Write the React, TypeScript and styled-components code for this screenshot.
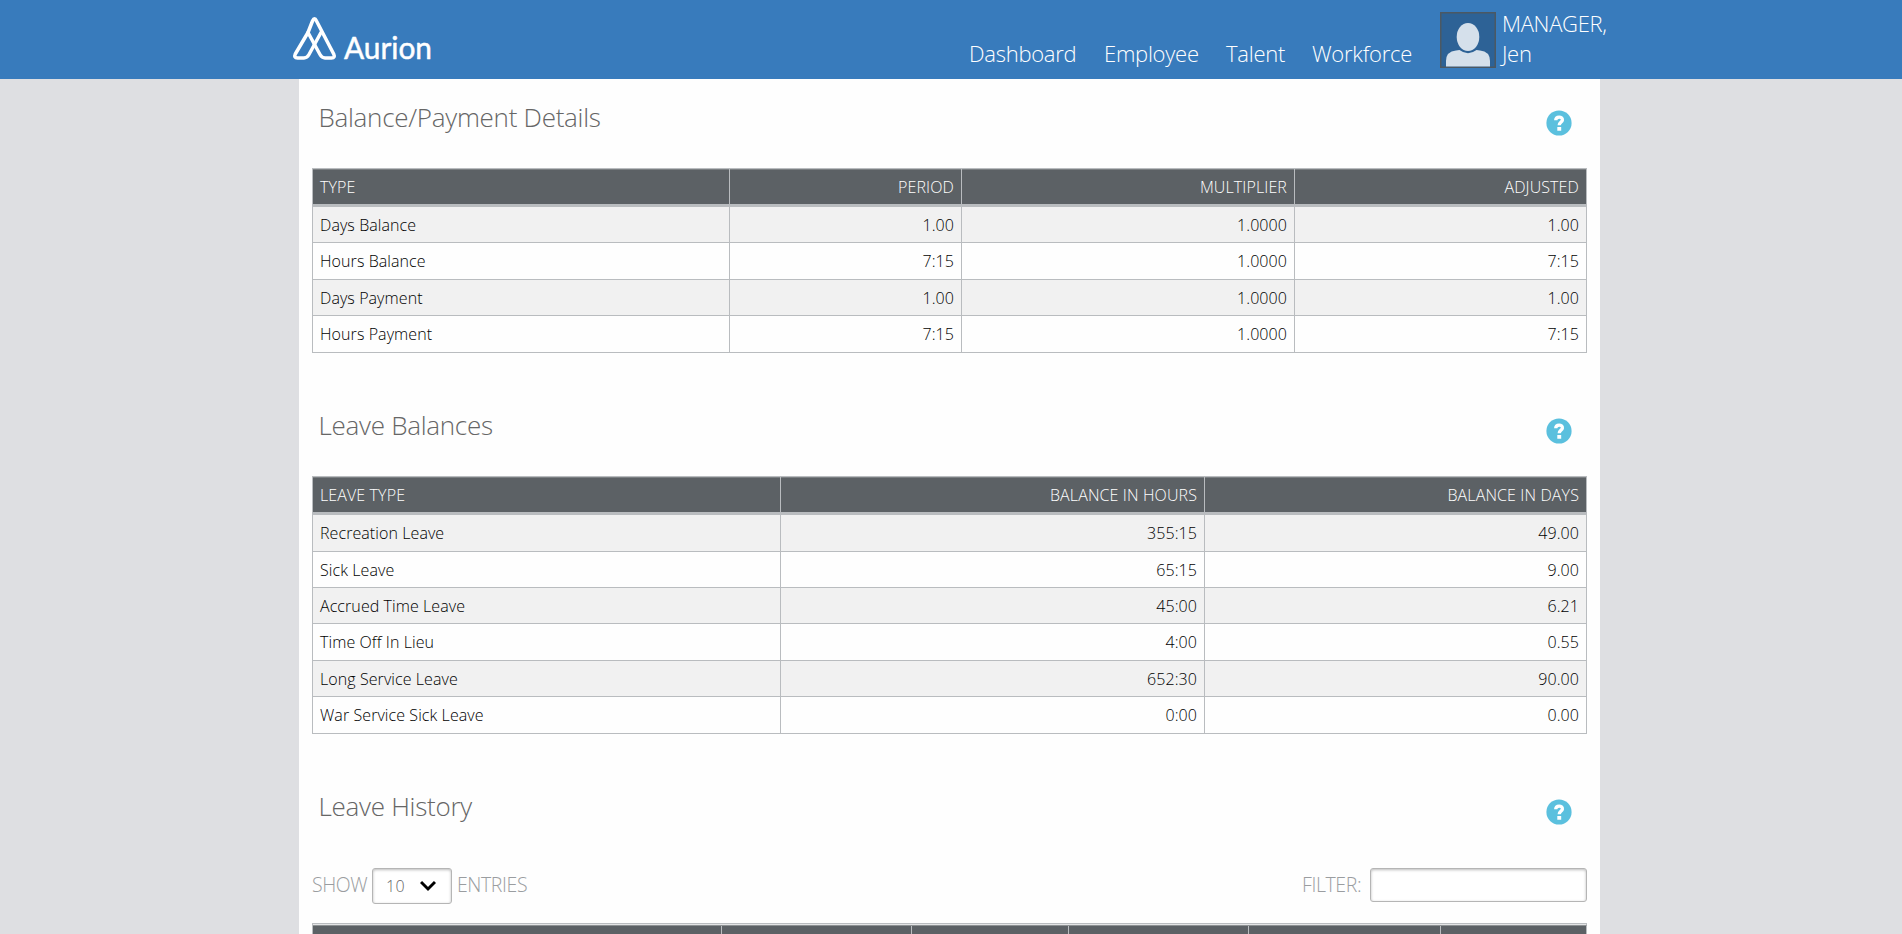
import React from "react";
import styled, { createGlobalStyle } from "styled-components";

const Global = createGlobalStyle`
  * { box-sizing: border-box; }
  body { margin: 0; background: #dedfe2; font-family: "Open Sans", sans-serif; font-weight: 300; height: 934px; overflow: hidden; }
`;
const Page = styled.div`height: 934px; overflow: hidden;`;
const Header = styled.header`
  height: 79px; background: #387bbc; color: #fff; display: flex; padding: 0 290px 0 292px; justify-content: space-between;
`;
const Logo = styled.svg`display: block; width: 140px; height: 46px; margin-top: 16px; overflow: visible;`;
const Wordmark = styled.text`font-family: Lato, sans-serif; font-size: 31px; font-weight: 400; fill: #fff; stroke: #fff; stroke-width: 0.5px;`;
const Right = styled.div`display: flex;`;
const Nav = styled.nav`display: flex; gap: 27px; margin: 37px 26px 0 0;`;
const NavItem = styled.a<{ $w: number }>`
  font-size: 22px; line-height: 32px; letter-spacing: -0.26px; width: ${(p) => p.$w}px; white-space: nowrap;
`;
const Avatar = styled.svg`width: 56px; height: 56px; margin: 12px 6px 0 0;`;
const UserName = styled.div`width: 110px; font-size: 22px; line-height: 30px; letter-spacing: -0.3px; margin-top: 8px; white-space: nowrap;`;
const Panel = styled.main`width: 1301px; height: 855px; margin-left: 299px; background: #fefefe; padding: 0 13px;`;
const Heading = styled.div<{ $h: number; $pt: number }>`
  height: ${(p) => p.$h}px; padding: ${(p) => p.$pt}px 15.5px 0 6.5px; display: flex; justify-content: space-between;
`;
const Title = styled.h2`margin: 0; font-size: 26px; line-height: 36px; font-weight: 300; letter-spacing: -0.28px; color: #666;`;
const Help = styled.svg`width: 26px; height: 26px; margin-top: 11px;`;
const Table = styled.div`border-left: 1px solid #b9bcbf; border-top: 1px solid #b9bcbf; width: 1275px;`;
const Row = styled.div<{ $cols: string; $h: number; $odd?: boolean }>`
  display: grid; grid-template-columns: ${(p) => p.$cols}; height: ${(p) => p.$h}px;
  border-bottom: 1px solid #b9bcbf; background: ${(p) => (p.$odd ? "#f1f1f1" : "#fefefe")}; color: #000;
`;
const HeadRow = styled(Row)`background: #5c6165; color: #fff; border-bottom: 3px solid #b9bcbf; box-shadow: inset 0 1px #7b7f82;`;
const Cell = styled.div`
  border-right: 1px solid #b9bcbf; padding: 0 7px; font-size: 16px; line-height: 36px; letter-spacing: 0.08px;
  white-space: nowrap; overflow: hidden;
  &:not(:first-child) { text-align: right; }
`;
const HeadCell = styled(Cell)`line-height: 37px; letter-spacing: 0.12px;`;
const Controls = styled.div`
  display: flex; justify-content: space-between; height: 55px; color: #9a9da0; font-size: 19.5px; letter-spacing: -0.4px;
`;
const Group = styled.div`display: flex;`;
const Label = styled.label<{ $w: number; $indent?: number }>`
  width: ${(p) => p.$w}px; padding-left: ${(p) => p.$indent ?? 0}px; line-height: 34px; white-space: nowrap;
`;
const Select = styled.div`
  width: 80px; height: 36px; border: 1px solid #b5b5b5; border-radius: 3px; box-shadow: inset 0 1px 3px #bbb;
  display: flex; align-items: center; justify-content: space-between; padding: 0 15px 0 13px; font-size: 16px;
  letter-spacing: 0.3px; color: #666; background: #fff;
`;
const Input = styled.input`width: 217px; height: 34px; border: 1px solid #b5b5b5; border-radius: 3px; box-shadow: inset 0 1px 3px #bbb; background: #fff;`;
const HistoryTop = styled.div`height: 2px; background: #e4e5e6; border-bottom: 1px solid #8d9193; border-right: 1px solid #b9bcbf;`;
const HistoryHead = styled(Row)`background: #5c6165; border: 0;`;

const HelpIcon = () => (
  <Help viewBox="0 0 26 26">
    <circle cx="13" cy="13" r="12.6" fill="#5bc0de" />
    <path d="M9.7 10.3C9.8 5.9 16.7 6.1 16.4 10C16.2 12.4 13.2 12.4 13.2 15.3" fill="none" stroke="#fff" strokeWidth="3.3" />
    <path d="M11.300 17h3.900v3.800h-3.900z" fill="#fff" />
  </Help>
);

type Data = { title: string; pt: number; h: number; cols: string; head: string[]; rows: [number, ...string[]][] };
const tables: Data[] = [
  {
    title: "Balance/Payment Details", pt: 20, h: 89, cols: "417px 232px 333px 292px",
    head: ["TYPE", "PERIOD", "MULTIPLIER", "ADJUSTED"],
    rows: [
      [36, "Days Balance", "1.00", "1.0000", "1.00"],
      [37, "Hours Balance", "7:15", "1.0000", "7:15"],
      [36, "Days Payment", "1.00", "1.0000", "1.00"],
      [37, "Hours Payment", "7:15", "1.0000", "7:15"],
    ],
  },
  {
    title: "Leave Balances", pt: 54, h: 123, cols: "468px 424px 382px",
    head: ["LEAVE TYPE", "BALANCE IN HOURS", "BALANCE IN DAYS"],
    rows: [
      [37, "Recreation Leave", "355:15", "49.00"],
      [36, "Sick Leave", "65:15", "9.00"],
      [36, "Accrued Time Leave", "45:00", "6.21"],
      [37, "Time Off In Lieu", "4:00", "0.55"],
      [36, "Long Service Leave", "652:30", "90.00"],
      [37, "War Service Sick Leave", "0:00", "0.00"],
    ],
  },
];
const navItems: [string, number][] = [["Dashboard", 108], ["Employee", 95], ["Talent", 59], ["Workforce", 102]];

export default function App() {
  return (
    <Page>
      <Global />
      <Header>
        <Logo viewBox="0 0 140 46" fill="none" stroke="#fff" strokeLinecap="round" strokeLinejoin="round">
          <g strokeWidth="3.5">
            <path d="M16 16.500L3.300 38Q1.500 42 5.500 42H12Q15 42 17 38.500L29 16.500" />
            <path d="M16 16.500L20.500 5Q22.500 0.500 24.500 5L41.700 38Q43.500 42 39.500 42H33Q30 42 28 38.500L16 16.500" />
          </g>
          <Wordmark x="52" y="43" textLength="88" lengthAdjust="spacingAndGlyphs">Aurion</Wordmark>
        </Logo>
        <Right>
          <Nav>{navItems.map(([t, w]) => <NavItem key={t} $w={w}>{t}</NavItem>)}</Nav>
          <Avatar viewBox="0 0 56 56">
            <rect x="0.750" y="0.750" width="54.500" height="54.500" fill="#2d6296" stroke="#4b5863" strokeWidth="1.500" />
            <ellipse cx="28" cy="25" rx="11.300" ry="14" fill="#d5e0eb" />
            <path d="M6 54.500V49Q6 39.500 16 38.500L19.500 38Q28 44.500 36.500 38L40 38.500Q50 39.500 50 49V54.500Z" fill="#d5e0eb" />
          </Avatar>
          <UserName>MANAGER,<br />Jen</UserName>
        </Right>
      </Header>
      <Panel>
        {tables.map((t) => (
          <React.Fragment key={t.title}>
            <Heading $h={t.h} $pt={t.pt}><Title>{t.title}</Title><HelpIcon /></Heading>
            <Table>
              <HeadRow $cols={t.cols} $h={38}>{t.head.map((c) => <HeadCell key={c}>{c}</HeadCell>)}</HeadRow>
              {t.rows.map(([h, ...cells], i) => (
                <Row key={i} $cols={t.cols} $h={h} $odd={i % 2 === 0}>{cells.map((c, j) => <Cell key={j}>{c}</Cell>)}</Row>
              ))}
            </Table>
          </React.Fragment>
        ))}
        <Heading $h={134} $pt={54}><Title>Leave History</Title><HelpIcon /></Heading>
        <Controls>
          <Group>
            <Label $w={60}>SHOW</Label>
            <Select>
              10
              <svg width="16" height="12" viewBox="0 0 16 12"><path d="M1 2L8 9L15 2" fill="none" stroke="#000" strokeWidth="3" /></svg>
            </Select>
            <Label $w={80} $indent={5}>ENTRIES</Label>
          </Group>
          <Group><Label $w={68}>FILTER:</Label><Input /></Group>
        </Controls>
        <Table>
          <HistoryTop />
          <HistoryHead $cols="409px 190px 157px 180px 192px 146px" $h={40}>
            {[0, 1, 2, 3, 4, 5].map((i) => <Cell key={i} />)}
          </HistoryHead>
        </Table>
      </Panel>
    </Page>
  );
}
